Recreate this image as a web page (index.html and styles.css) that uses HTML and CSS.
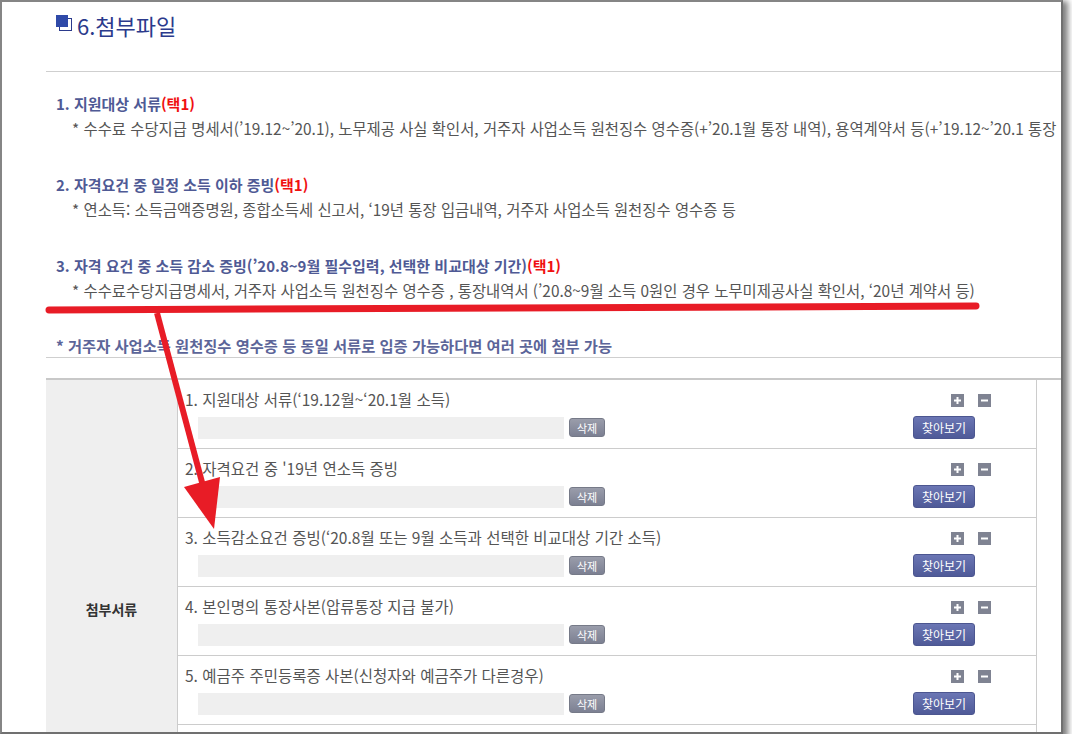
FILE: index.html
```html
<!DOCTYPE html>
<html lang="ko">
<head>
  <meta charset="UTF-8" />
  <title>첨부파일</title>
  <link rel="stylesheet" href="styles.css">
</head>
<body>
  <div class="frame">
    <div class="page">
      <h3 class="sec-title">
        <svg class="sec-ico" width="16" height="16" viewBox="0 0 16 16">
          <rect x="3.5" y="3.5" width="12" height="12" fill="#fff" stroke="#2b3a8c" stroke-width="1"/>
          <rect x="0" y="0" width="12" height="12" fill="#2f4aa8"/>
        </svg>
        6.첨부파일
      </h3>

      <div class="guide">
        <div class="g-item">
          <p class="g-head">1. 지원대상 서류<em>(택1)</em></p>
          <p class="g-sub">* 수수료 수당지급 명세서(’19.12~’20.1), 노무제공 사실 확인서, 거주자 사업소득 원천징수 영수증(+’20.1월 통장 내역), 용역계약서 등(+’19.12~’20.1 통장 내역)</p>
        </div>
        <div class="g-item">
          <p class="g-head">2. 자격요건 중 일정 소득 이하 증빙<em>(택1)</em></p>
          <p class="g-sub">* 연소득: 소득금액증명원, 종합소득세 신고서, ‘19년 통장 입금내역, 거주자 사업소득 원천징수 영수증 등</p>
        </div>
        <div class="g-item">
          <p class="g-head">3. 자격 요건 중 소득 감소 증빙(’20.8~9월 필수입력, 선택한 비교대상 기간)<em>(택1)</em></p>
          <p class="g-sub">* 수수료수당지급명세서, 거주자 사업소득 원천징수 영수증 , 통장내역서 (’20.8~9월 소득 0원인 경우 노무미제공사실 확인서, ‘20년 계약서 등)</p>
        </div>
        <p class="g-note">* 거주자 사업소득 원천징수 영수증 등 동일 서류로 입증 가능하다면 여러 곳에 첨부 가능</p>
      </div>

      <div class="attach">
        <div class="attach-th">첨부서류</div>
        <div class="attach-list">
          <div class="file-row">
            <div class="file-top">
              <span class="file-label">1. 지원대상 서류(‘19.12월~‘20.1월 소득)</span>
              <span class="pm">
                <svg class="ico" viewBox="0 0 13 13"><rect width="13" height="13" fill="#7f8392"/><path d="M3 5.5h7v2H3zM5.5 3h2v7h-2z" fill="#fff"/></svg>
                <svg class="ico" viewBox="0 0 13 13"><rect width="13" height="13" fill="#7f8392"/><path d="M3 5.5h7v2H3z" fill="#fff"/></svg>
              </span>
            </div>
            <div class="file-bottom">
              <span class="file-box"></span>
              <button class="btn-del">삭제</button>
              <button class="btn-find">찾아보기</button>
            </div>
          </div>
          <div class="file-row">
            <div class="file-top">
              <span class="file-label">2. 자격요건 중 '19년 연소득 증빙</span>
              <span class="pm">
                <svg class="ico" viewBox="0 0 13 13"><rect width="13" height="13" fill="#7f8392"/><path d="M3 5.5h7v2H3zM5.5 3h2v7h-2z" fill="#fff"/></svg>
                <svg class="ico" viewBox="0 0 13 13"><rect width="13" height="13" fill="#7f8392"/><path d="M3 5.5h7v2H3z" fill="#fff"/></svg>
              </span>
            </div>
            <div class="file-bottom">
              <span class="file-box"></span>
              <button class="btn-del">삭제</button>
              <button class="btn-find">찾아보기</button>
            </div>
          </div>
          <div class="file-row">
            <div class="file-top">
              <span class="file-label">3. 소득감소요건 증빙(‘20.8월 또는 9월 소득과 선택한 비교대상 기간 소득)</span>
              <span class="pm">
                <svg class="ico" viewBox="0 0 13 13"><rect width="13" height="13" fill="#7f8392"/><path d="M3 5.5h7v2H3zM5.5 3h2v7h-2z" fill="#fff"/></svg>
                <svg class="ico" viewBox="0 0 13 13"><rect width="13" height="13" fill="#7f8392"/><path d="M3 5.5h7v2H3z" fill="#fff"/></svg>
              </span>
            </div>
            <div class="file-bottom">
              <span class="file-box"></span>
              <button class="btn-del">삭제</button>
              <button class="btn-find">찾아보기</button>
            </div>
          </div>
          <div class="file-row">
            <div class="file-top">
              <span class="file-label">4. 본인명의 통장사본(압류통장 지급 불가)</span>
              <span class="pm">
                <svg class="ico" viewBox="0 0 13 13"><rect width="13" height="13" fill="#7f8392"/><path d="M3 5.5h7v2H3zM5.5 3h2v7h-2z" fill="#fff"/></svg>
                <svg class="ico" viewBox="0 0 13 13"><rect width="13" height="13" fill="#7f8392"/><path d="M3 5.5h7v2H3z" fill="#fff"/></svg>
              </span>
            </div>
            <div class="file-bottom">
              <span class="file-box"></span>
              <button class="btn-del">삭제</button>
              <button class="btn-find">찾아보기</button>
            </div>
          </div>
          <div class="file-row">
            <div class="file-top">
              <span class="file-label">5. 예금주 주민등록증 사본(신청자와 예금주가 다른경우)</span>
              <span class="pm">
                <svg class="ico" viewBox="0 0 13 13"><rect width="13" height="13" fill="#7f8392"/><path d="M3 5.5h7v2H3zM5.5 3h2v7h-2z" fill="#fff"/></svg>
                <svg class="ico" viewBox="0 0 13 13"><rect width="13" height="13" fill="#7f8392"/><path d="M3 5.5h7v2H3z" fill="#fff"/></svg>
              </span>
            </div>
            <div class="file-bottom">
              <span class="file-box"></span>
              <button class="btn-del">삭제</button>
              <button class="btn-find">찾아보기</button>
            </div>
          </div>
          <div class="file-row"></div>
        </div>
        <div class="attach-side"></div>
      </div>
    </div>

    <!-- 빨간 표시 (강조선 + 화살표) -->
    <svg class="annot" width="1072" height="743" viewBox="0 0 1072 743">
      <path d="M49 310 L976 306" stroke="#e81c26" stroke-width="7" stroke-linecap="round" fill="none"/>
      <path d="M157 313 L203 486" stroke="#e81c26" stroke-width="6" fill="none"/>
      <polygon points="184,487 220,477 214,529" fill="#e81c26"/>
    </svg>
  </div>
</body>
</html>
```

FILE: styles.css
```css
html, body {
  margin: 0;
  padding: 0;
  background: #fff;
}
body {
  font-family: "Noto Sans CJK KR", "Noto Sans", sans-serif;
  font-size: 15px;
  color: #555;
}
.frame {
  position: relative;
  width: 1059px;
  height: 730px;
  border: 2px solid #858585;
  border-right-color: #707070;
  border-bottom-color: #707070;
  box-shadow: 3px 3px 6px 2px rgba(0, 0, 0, 0.5);
  overflow: hidden;
  background: #fff;
}
.page {
  padding-left: 44px;
  width: 1100px;
}
.sec-title {
  display: flex;
  align-items: flex-start;
  margin: 0;
  padding: 8px 0 0 10px;
  height: 61px;
  font-size: 22px;
  font-weight: normal;
  line-height: 30px;
  color: #2b3a8c;
  border-bottom: 1px solid #cfcfcf;
}
.sec-ico {
  margin: 5px 5px 0 0;
}
.guide {
  padding: 19px 0 0 10px;
}
.g-item {
  margin-bottom: 31px;
}
.g-item p {
  margin: 0;
  white-space: nowrap;
  line-height: 25px;
}
.g-head {
  font-weight: bold;
  color: #4f5a95;
}
.g-head em {
  font-style: normal;
  color: #f01010;
}
.g-sub {
  padding-left: 16px;
  font-size: 15.4px;
  color: #555;
}
.g-note {
  margin: -1px 0 0 -10px;
  padding-left: 10px;
  line-height: 24px;
  font-size: 15.3px;
  font-weight: bold;
  color: #5c6599;
  border-bottom: 1px solid #cfcfcf;
  white-space: nowrap;
}
.attach {
  display: grid;
  grid-template-columns: 132px 858px 1fr;
  margin-top: 20px;
  border-top: 2px solid #c8c8c8;
}
.attach-th {
  background: #efefef;
  border-right: 1px solid #cccccc;
  text-align: center;
  padding-top: 219px;
  line-height: 20px;
  font-size: 14px;
  font-weight: bold;
  color: #333;
}
.attach-side {
  border-left: 1px solid #cccccc;
}
.file-row {
  box-sizing: border-box;
  height: 69px;
  padding: 9px 0 0 7px;
  border-bottom: 1px solid #cccccc;
}
.file-top {
  display: flex;
  align-items: center;
  height: 20px;
  padding-right: 45px;
}
.file-label {
  flex: 1;
  white-space: nowrap;
  font-size: 15.5px;
  color: #555;
}
.pm {
  display: flex;
  gap: 14px;
  margin-top: 3px;
}
.ico {
  width: 13px;
  height: 13px;
  display: block;
}
.file-bottom {
  display: flex;
  align-items: center;
  height: 23px;
  margin-top: 7px;
  padding-left: 13px;
  padding-right: 61px;
}
.file-box {
  width: 366px;
  height: 22px;
  background: #efefef;
}
.btn-del {
  margin-left: 5px;
  width: 36px;
  height: 19px;
  padding: 0;
  border: 1px solid #767a88;
  border-radius: 3px;
  background: linear-gradient(#9a9dab, #7c8092);
  color: #fff;
  font-family: "Noto Sans CJK KR", sans-serif;
  font-size: 11px;
  line-height: 16px;
}
.btn-find {
  margin-left: auto;
  width: 62px;
  height: 23px;
  padding: 0;
  border: 1px solid #4c5690;
  border-radius: 3px;
  background: linear-gradient(#6b76b4, #4f5a98);
  color: #fff;
  font-family: "Noto Sans CJK KR", sans-serif;
  font-size: 12px;
  line-height: 20px;
}
.annot {
  position: absolute;
  left: -2px;
  top: -2px;
  pointer-events: none;
}
```
